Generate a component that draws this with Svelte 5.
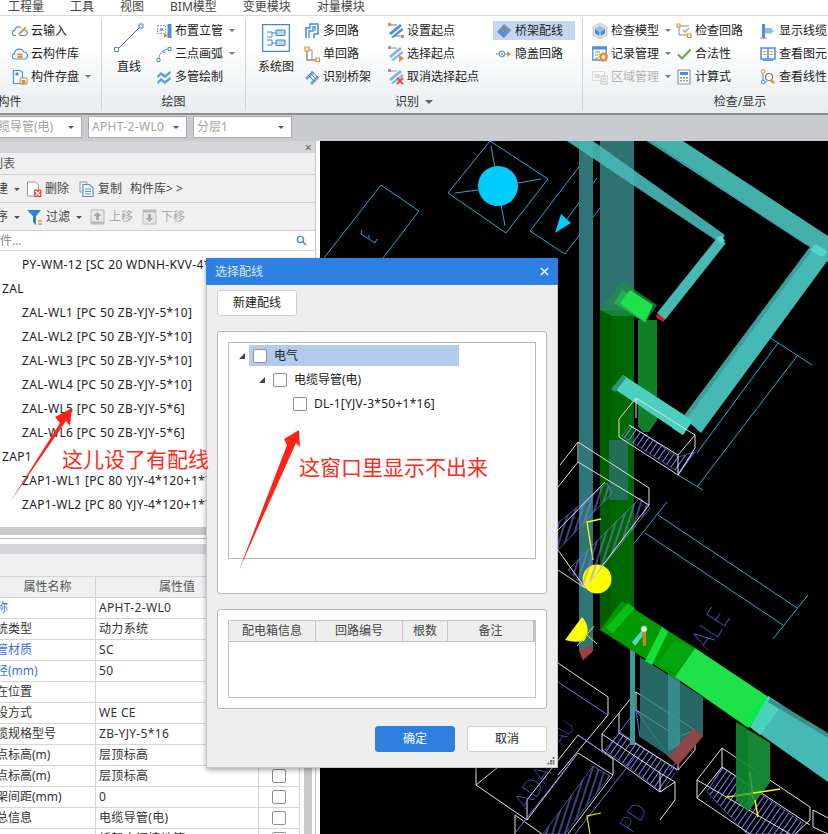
<script>
  const I = {
    cloudIn: '<path d="M4 12.5H3a2.6 2.6 0 0 1-.3-5.2A4 4 0 0 1 9 4.6" fill="none" stroke="#4a8fdc" stroke-width="1.2"/><path d="M12.5 7a2.6 2.6 0 0 1 0 5.5H7" fill="none" stroke="#4a8fdc" stroke-width="1.2"/><path d="M6 11l7-7.5 1.5 1.2-6.5 7z" fill="#f08a24"/>',
    cloudLib: '<path d="M4 13H3a2.7 2.7 0 0 1-.3-5.4A4.6 4.6 0 0 1 11.6 6 3.6 3.6 0 0 1 13 13H4" fill="none" stroke="#4a8fdc" stroke-width="1.1"/><path d="M5.5 8.5h5M5.5 11h5" stroke="#f08a24" stroke-width="1.8"/>',
    save: '<path d="M1.5 1.5h7l2 2v11h-9z" fill="#fff" stroke="#4a8fdc" stroke-width="1.2"/><path d="M3.5 3.5h3v3h-3z" fill="#4a8fdc"/><path d="M8 9h7v6H8z" fill="#fff" stroke="#777" stroke-width=".8"/><path d="M9.5 11h4v4h-4z" fill="#f08a24"/>',
    place: '<path d="M1.5 2.5h8v8h-8z" fill="none" stroke="#4a8fdc" stroke-dasharray="1.4 1.4"/><path d="M4 5h3v3H4z" fill="#8aa"/><path d="M11.5 1h4v14h-4z" fill="#4a8fdc"/><path d="M8 10l4 2.5L8 15z" fill="#f08a24"/>',
    arc: '<path d="M3 13C3 7 7 3 13 3" fill="none" stroke="#999" stroke-width="1"/><path d="M1 12.5h3v3H1zM12 1.5h3v3h-3z" fill="#fff" stroke="#4a8fdc"/><path d="M7 4.5h2v2H7z" fill="#fff" stroke="#4a8fdc" stroke-width=".7"/>',
    multi: '<path d="M1 7l4-4 4 3 5-4 1 2-6 5-4-3-3 3zM1 13l4-4 4 3 5-4 1 2-6 5-4-3-3 3z" fill="#4a8fdc" opacity=".9"/>',
    mloop: '<path d="M2 15V5h4V1h8v10h-4v4" fill="none" stroke="#4a8fdc" stroke-width="1.6"/><path d="M5 15V8h4V4h2v4" fill="none" stroke="#4a8fdc" stroke-width="1.4"/>',
    sloop: '<path d="M3 4v10h9" fill="none" stroke="#8c8c8c" stroke-width="1.4"/><path d="M3 4h5v9" fill="none" stroke="#8c8c8c" stroke-width="1"/><path d="M1 1h4v4H1zM12 12h3.500v3.500H12z" fill="#fff" stroke="#f08a24" stroke-width="1.2"/>',
    recog: '<path d="M1 9l7-7 2 2-7 7zM6 14l7-7 2 2-7 7z" fill="#6aa5e4"/><path d="M4 6l6 6M6 4l6 6M8 2.500l6 6" stroke="#3f7fcc" stroke-width="1"/>',
    setS: '<path d="M1 10L12 1l2 2L3 12zM3 14L14 5l1.500 2L5 15z" fill="#4a8fdc"/><path d="M1 2h8M7 13h8" stroke="#777"/><path d="M0 0h3v3H0zM13 12h3v3h-3z" fill="#f08a24"/>',
    selS: '<path d="M1 10L12 1l2 2L3 12zM3 14L14 5l1.500 2L5 15z" fill="#82b2e6"/><path d="M1 2h8" stroke="#999"/><path d="M0 0h3v3H0z" fill="#999"/><path d="M11 9l5 3.500-5 3.500z" fill="#f08a24"/>',
    canS: '<path d="M1 10L12 1l2 2L3 12zM3 14L14 5l1.500 2L5 15z" fill="#82b2e6"/><path d="M1 2h8" stroke="#999"/><path d="M0 0h3v3H0z" fill="#999"/><path d="M9 9l6 6M15 9l-6 6" stroke="#e0533d" stroke-width="2"/>',
    tray: '<path d="M1 9l7-8 7 6-7 8z" fill="#4a8fdc"/><path d="M4 6l6 5M6 4l6 5M8 2.500l6 5" stroke="#f08a24" stroke-width=".9"/><path d="M2.500 9l5.500 5" stroke="#8c8c8c"/>',
    hid: '<circle cx="6" cy="8" r="3" fill="none" stroke="#4a8fdc"/><path d="M4 6l4 4M8 6l-4 4" stroke="#4a8fdc" stroke-width=".7"/><path d="M0 8h3" stroke="#4a8fdc"/><path d="M9 8h3" stroke="#999"/><path d="M11 5l4 3-4 3z" fill="#f08a24"/>',
    cube: '<path d="M8 0l7 3.500v9L8 16l-7-3.500v-9z" fill="#ddd" stroke="#bbb" stroke-width=".6"/><path d="M8 3l5 2.500-5 2.500-5-2.500z" fill="#8fc0ee"/><path d="M3 6l4.500 2.500V13L3 10.500zM13 6L8.500 8.500V13l4.500-2.500z" fill="#4a8fdc"/>',
    rec: '<path d="M.8 1h13.500v13H.8z" fill="#fff" stroke="#4a8fdc" stroke-width="1.3"/><path d="M.8 1h13.500v2.500H.8z" fill="#4a8fdc"/><path d="M3 6h5M3 9h3M3 12h3" stroke="#888"/><circle cx="11.500" cy="11" r="3" fill="none" stroke="#f08a24" stroke-width="2"/><circle cx="11.500" cy="11" r="4.500" fill="none" stroke="#f08a24" stroke-width="1.200" stroke-dasharray="1.600 1.600"/>',
    area: '<path d="M.5 2.500h12v9H.5z" fill="none" stroke="#c8c8c8" stroke-dasharray="1.500 1"/><path d="M3 5h5v4H3z" fill="#ddd"/><path d="M9 7h7v8H9z" fill="#eee" stroke="#c8c8c8"/><path d="M10.500 10h4M10.500 12.500h4" stroke="#c8c8c8"/>',
    chkL: '<path d="M3 3h10M3 3v9h9" fill="none" stroke="#8c8c8c"/><path d="M1 1h3v3H1zM11.500 11h3.500v3.500h-3.500z" fill="#fff" stroke="#f08a24" stroke-width="1.200"/><path d="M7 7l2 2 4-4" fill="none" stroke="#8fb070" stroke-width="1.300"/>',
    ok: '<path d="M2 8.500l4 4 8.500-9" fill="none" stroke="#6fa84a" stroke-width="2.200"/>',
    calc: '<path d="M2 1h12v14H2z" fill="#fff" stroke="#8c9aa8" stroke-width="1.200"/><path d="M4 3h8v3H4z" fill="#4a8fdc"/><path d="M4 8h2v1.500H4zM7 8h2v1.500H7zM10 8h2v1.500h-2zM4 11h2v1.500H4zM7 11h2v1.500H7zM10 11h2v1.500h-2z" fill="#999"/>',
    cable: '<path d="M2 1h3v14H2z" fill="#4a8fdc"/><path d="M5 5h7v2l3 1-3 1v1.500H5z" fill="#8fbce8"/><path d="M0 15h7" stroke="#8c8c8c"/>',
    book: '<path d="M1 2h14v11H1z" fill="#fff" stroke="#4a8fdc" stroke-width="1.500"/><path d="M8 2v11" stroke="#4a8fdc" stroke-width="1.500"/><path d="M3 5.500h3.500M3 8.500h3.500M9.500 5.500H13M9.500 8.500H13" stroke="#f08a24"/><path d="M3 14.500h10" stroke="#4a8fdc"/>',
    vline: '<path d="M3 3v10h4" fill="none" stroke="#4a8fdc"/><circle cx="3" cy="2.500" r="1.800" fill="#fff" stroke="#f08a24"/><circle cx="3" cy="13" r="1.800" fill="#fff" stroke="#4a8fdc"/><circle cx="9" cy="8" r="3.500" fill="#fff" stroke="#777" stroke-width="1.200"/><path d="M11 11l3 3" stroke="#f08a24" stroke-width="2.500"/>',
    del: '<path d="M1.500 1h8l3 3v11h-11z" fill="#fff" stroke="#999"/><path d="M8 8.500h7.500V16H8z" fill="#e0533d"/><path d="M9.500 10l4.500 4.500M14 10l-4.500 4.500" stroke="#fff" stroke-width="1.100"/>',
    copy: '<path d="M1 1h7v2M1 1v10h2" fill="none" stroke="#999"/><path d="M4 3.500h6.500L14 7v8.500H4z" fill="#fff" stroke="#4a8fdc" stroke-width="1.200"/><path d="M6 8h6M6 10.500h6M6 13h6" stroke="#4a8fdc"/>',
    filter: '<path d="M0 1h14L9 7v9l-3-3V7z" fill="#2f7fd0"/><path d="M11 12h4M11 15h4" stroke="#f08a24" stroke-width="1.300"/>',
    up: '<path d="M1 1h13v14H1z" fill="#e8e8e8" stroke="#bbb"/><path d="M1 12.500h13V15H1z" fill="#bbb"/><path d="M7.500 3l4 4h-2.500v4H6V7H3.500z" fill="#aaa"/>',
    down: '<path d="M1 1h13v14H1z" fill="#e8e8e8" stroke="#bbb"/><path d="M1 1h13v2.500H1z" fill="#bbb"/><path d="M7.500 13l4-4h-2.500V5H6v4H3.500z" fill="#aaa"/>',
    search: '<circle cx="6.500" cy="6.500" r="4.500" fill="none" stroke="#3d8fd6" stroke-width="2"/><path d="M10 10l4.500 4.500" stroke="#3d8fd6" stroke-width="2.200"/>'
  };
  const c1 = [['cloudIn','云输入'],['cloudLib','云构件库'],['save','构件存盘',1]];
  const c2 = [['place','布置立管',1],['arc','三点画弧',1],['multi','多管绘制']];
  const c3 = [['mloop','多回路'],['sloop','单回路'],['recog','识别桥架']];
  const c4 = [['setS','设置起点'],['selS','选择起点'],['canS','取消选择起点']];
  const c6 = [['cube','检查模型',1],['rec','记录管理',1],['area','区域管理',1,1]];
  const c7 = [['chkL','检查回路'],['ok','合法性'],['calc','计算式']];
  const c8 = [['cable','显示线缆'],['book','查看图元'],['vline','查看线性']];
  const menu = ['工程量','工具','视图','BIM模型','变更模块','对量模块'];
  const list = [
    ['PY-WM-12 [SC 20 WDNH-KVV-4*1.5]',1],['ZAL',0],['ZAL-WL1 [PC 50 ZB-YJY-5*10]',1],['ZAL-WL2 [PC 50 ZB-YJY-5*10]',1],
    ['ZAL-WL3 [PC 50 ZB-YJY-5*10]',1],['ZAL-WL4 [PC 50 ZB-YJY-5*10]',1],['ZAL-WL5 [PC 50 ZB-YJY-5*6]',1],['ZAL-WL6 [PC 50 ZB-YJY-5*6]',1],
    ['ZAP1',0],['ZAP1-WL1 [PC 80 YJY-4*120+1*70]',1],['ZAP1-WL2 [PC 80 YJY-4*120+1*70]',1]
  ];
  const props = [
    ['称','APHT-2-WL0',1],['统类型','动力系统',0],['管材质','SC',1],['径(mm)','50',1],['在位置','',0],['设方式','WE CE',0],
    ['缆规格型号','ZB-YJY-5*16',0],['点标高(m)','层顶标高',0],['点标高(m)','层顶标高',0],['架间距(mm)','0',0],['总信息','电缆导管(电)',0],['','桥架中间接地箱',0]
  ];
  const wires = [
    '619,419 636,398 695,435 695,448 678,475 619,437 619,419','629,425 678,455 678,475','678,455 695,435','636,398 636,418',
    '578,442 649,488 649,505 585,588 558,570','578,442 560,465','578,442 578,462 649,505','558,550 585,588','558,530 605,482','578,462 558,487',
    '558,663 608,697 608,715 558,775','578,735 613,759 613,775 568,834','578,735 527,800 527,820 578,753 613,775','476,768 476,785 527,820','476,785 497,768','515,815 515,834','515,815 542,834',
    '602,734 619,713 636,692 695,730 695,750 678,770 619,733 619,713','602,734 660,773 675,782 675,800 660,820','602,734 602,750 660,792 675,782','660,773 660,792','636,692 636,710 678,737','678,770 678,737 695,730',
    '722,748 810,807 810,820 795,834','697,780 722,748 722,767 810,825','697,780 697,798 750,834','697,780 790,834','722,767 697,798','813,810 828,818','813,810 813,827 828,834'
  ];
  const blues = ['558,682 608,715','578,753 515,833','575,834 635,757','636,710 669,757','640,737 636,710 619,733','693,745 669,770','578,735 610,757'];
  const cyans = [
    '324,258 381,185 419,211 383,258','362,230 361,234 375,243 377,239','369,235 369,238',
    '490,141 548,179 506,233 448,193 490,141','491,146 495,168','541,179 518,183','455,193 478,190','501,204 505,226',
    '530,231 565,254 623,178','530,231 588,155','597,178 565,222',
    '632,546 667,502','658,515 797,608','645,533 783,625','773,639 808,595','763,333 812,365','778,343 697,453','797,356 697,487','678,475 703,490'
  ];
</script>

{#snippet icon(n, cls = 'ic')}
  <svg class={cls} viewBox="0 0 16 16">{@html I[n]}</svg>
{/snippet}

{#snippet col(items, cls)}
  <div class="col {cls}">
    {#each items as [n, t, drop, off]}
      <div class="item" class:off>
        {@render icon(n)}<span>{t}</span>{#if drop}<i class="tri"></i>{/if}
      </div>
    {/each}
  </div>
{/snippet}

<div class="page">
  <nav class="menu">
    {#each menu as m}<span>{m}</span>{/each}
  </nav>

  <section class="ribbon">
    <div class="group g1">
      <div class="cols">{@render col(c1, '')}</div>
      <div class="glabel">构件</div>
    </div>
    <div class="group g2">
      <div class="cols">
        <div class="big b-line">
          <svg viewBox="0 0 30 30"><path d="M3 27L27 3" stroke="#666" stroke-width="1"/><path d="M.5 24.500h4v4h-4zM25 1h4v4h-4z" fill="#fff" stroke="#3f87d8"/></svg>
          <span>直线</span>
        </div>
        {@render col(c2, 'c-place')}
      </div>
      <div class="glabel">绘图</div>
    </div>
    <div class="group g3">
      <div class="cols">
        <div class="big b-sys">
          <svg viewBox="0 0 28 28"><path d="M.7.700h26.600v26.600H.7z" fill="#fff" stroke="#3f87d8" stroke-width="1.200"/><path d="M5 8h5v5H5M5 16h5v5H5" fill="none" stroke="#3f87d8"/><path d="M14 6h9v5.500h-9zM14 16h9v5.500h-9z" fill="#bcd8f5" stroke="#3f87d8"/><path d="M10 9h4M10 19h4" stroke="#3f87d8"/></svg>
          <span>系统图</span>
        </div>
        {@render col(c3, 'c-loop')}
        {@render col(c4, 'c-start')}
        <div class="col c-tray">
          <div class="item hi">{@render icon('tray')}<span>桥架配线</span></div>
          <div class="item pad">{@render icon('hid')}<span>隐盖回路</span></div>
        </div>
      </div>
      <div class="glabel">识别 <i class="tri big-tri"></i></div>
    </div>
    <div class="group g4">
      <div class="cols">
        {@render col(c6, 'c-chk')}
        {@render col(c7, 'c-chk')}
        {@render col(c8, 'c-chk')}
      </div>
      <div class="glabel">检查/显示</div>
    </div>
  </section>

  <div class="selects">
    <div class="sel s1"><span>电缆导管(电)</span><i class="tri dark"></i></div>
    <div class="sel"><span class="latin">APHT-2-WL0</span><i class="tri dark"></i></div>
    <div class="sel"><span>分层1</span><i class="tri dark"></i></div>
  </div>

  <main class="main">
    <aside class="panel">
      <div class="strip"><span class="x">×</span></div>
      <div class="title"><span class="cut-title">列表</span></div>
      <div class="tools t1">
        <span class="cut1">新建</span><i class="tri dark"></i>
        <span class="tool m-del">{@render icon('del')}删除</span>
        <span class="tool m-copy">{@render icon('copy')}复制</span>
        <span class="m-lib">构件库&gt; &gt;</span>
      </div>
      <div class="tools t2">
        <span class="cut1">排序</span><i class="tri dark"></i>
        <span class="tool m-filter">{@render icon('filter')}过滤</span><i class="tri dark"></i>
        <span class="tool m-up gray">{@render icon('up')}上移</span>
        <span class="tool m-down gray">{@render icon('down')}下移</span>
      </div>
      <div class="search"><span class="ph">搜索构件...</span>{@render icon('search', 'sicon')}</div>
      <div class="list">
        {#each list as [t, sub]}<div class="li" class:sub>{t}</div>{/each}
      </div>
      <div class="hbar"></div>
      <div class="rule"></div>
      <div class="strip s2"></div>
      <div class="blank"></div>
      <div class="propwrap">
        <div class="props">
          <div class="pr head"><div class="c">属性名称</div><div class="c">属性值</div><div class="c"></div></div>
          {#each props as [a, b, blue]}
            <div class="pr">
              <div class="c name" class:blue>{a}</div>
              <div class="c val latin">{b}</div>
              <div class="c ck"><span class="box"></span></div>
            </div>
          {/each}
        </div>
        <div class="vbar"></div>
      </div>
    </aside>

    <svg class="canvas" viewBox="320 141 508 693">
      <defs>
        <pattern id="h" patternUnits="userSpaceOnUse" width="5" height="5" patternTransform="rotate(-55)">
          <path d="M0 2.500h5" stroke="#8080ff" stroke-width="1"/>
        </pattern>
        <pattern id="v" patternUnits="userSpaceOnUse" width="6" height="6" patternTransform="rotate(-72)">
          <path d="M0 3h6" stroke="#8080ff" stroke-width="1"/>
        </pattern>
      </defs>
      {#each cyans as p}<polyline points={p} fill="none" stroke="#12b4dc" stroke-width="1"/>{/each}
      <circle cx="498" cy="186" r="20" fill="#00ccff"/>
      <polygon points="555,233 561,214 571,223" fill="#00ccff"/>

      <!-- vertical shafts -->
      <rect x="579" y="141" width="14" height="510" fill="#2f7678"/>
      <polygon points="579,650 592,646 592,652 583,660" fill="#8a4a4a" stroke="#d22" stroke-width=".6"/>
      <rect x="600" y="141" width="34" height="170" fill="#2f7272"/>
      <rect x="600" y="310" width="34" height="320" fill="#005e00"/>
      <rect x="611" y="310" width="23" height="320" fill="#006800"/>
      <rect x="609" y="440" width="19" height="60" fill="#2f7272" fill-opacity=".75"/>
      <path d="M638 320h19v100l-8 12h-6l-5-6z" fill="#118027"/>

      <!-- upper teal trays -->
      <polygon points="647,141 683,141 828,236 828,262 810,247" fill="#47b9b5" fill-opacity=".95"/>
      <polygon points="647,141 652,141 810,247 806,245" fill="#3a9e9b"/>
      <polygon points="810,247 828,260 701,433 683,417" fill="#47b9b5"/>
      <polygon points="810,247 813,249 686,420 683,417" fill="#3a9e9b"/>
      <polygon points="816,244 828,252 822,257 810,250" fill="#4fd6cf"/>
      <polygon points="567,141 593,141 725,235 720,243" fill="#47b9b5" fill-opacity=".9"/>
      <polygon points="717,238 726,243 665,320 657,313" fill="#47b9b5"/>
      <polygon points="716,237 722,236 725,241 720,244" fill="#58d8d0"/>
      <polygon points="657,314 665,319 663,322 656,317" fill="#ff1010"/>

      <!-- green fitting -->
      <polygon points="600,310 622,281 657,305 645,323 633,316 612,316" fill="#1f8f4b" fill-opacity=".75"/>
      <polygon points="614,303 622,290 652,307 645,322" fill="#27ab57"/>
      <polygon points="620,303 630,290 653,305 645,322" fill="#1de24a"/>

      <!-- lower teal stub -->
      <polygon points="613,388 623,375 692,420 683,435" fill="#4bd0c0"/>
      <polygon points="611,389 623,375 626,378 615,392" fill="#2e8f86"/>
      <polygon points="683,417 692,422 683,435 672,428" fill="#4bd0c0"/>

      <!-- marks, hatching and wire boxes lie over the shafts -->
      <polyline points="601,519 587,522 593,560" fill="none" stroke="#ffff00" stroke-width="1.300"/>
      <circle cx="597" cy="579" r="14.500" fill="#ffff00"/>
      <path d="M565 640L582 617Q592 628 584 641Q574 643 565 640Z" fill="#ffff00"/>
      <path d="M577 646l17-20M587 635l10 9" stroke="#e8e800" stroke-width="1"/>
      <g stroke="#8080ff" stroke-width=".6">
        <polygon fill="url(#h)" points="630,425 678,457 695,452 680,473 622,436"/>
        <polygon fill="url(#v)" points="558,523 607,483 612,493 558,550"/>
        <polygon fill="url(#v)" points="568,570 640,498 650,508 585,588"/>
        <polygon fill="url(#h)" points="605,750 620,732 677,770 662,792"/>
        <polygon fill="url(#v)" points="593,766 610,776 565,834 543,834"/>
        <polygon fill="url(#h)" points="722,767 803,823 797,834 747,834 707,792"/>
      </g>
      {#each wires as p}<polyline points={p} fill="none" stroke="#e2e2e2" stroke-width="1"/>{/each}
      {#each blues as p}<polyline points={p} fill="none" stroke="#6f6ff0" stroke-width="1"/>{/each}
      <g class="cad">
        <text transform="translate(708 652) rotate(-57) scale(.78 1)" font-size="30">ALE</text>
        <text transform="translate(632 834) rotate(-57)" font-size="22">PD</text>
        <text transform="translate(527 812) rotate(-57)" font-size="24">ADA</text>
        <text transform="translate(562 746) rotate(-57)" font-size="18">AU</text>
      </g>

      <!-- large bottom bar -->
      <polygon points="640,657 703,697 703,736 670,757 640,737" fill="#2f7f7d" fill-opacity=".82"/>
      <polygon points="668,672 680,680 680,745 668,752" fill="#3a9492" fill-opacity=".8"/>
      <polygon points="669,757 693,729 703,736 678,765" fill="#8b4a4a" stroke="#e02020" stroke-width=".7"/>
      <rect x="630" y="643" width="5" height="102" fill="#3a9c9a"/>
      <polygon points="600,630 622,601 695,648 675,678" fill="#009a00"/>
      <polygon points="606,628 628,603 635,608 613,633" fill="#0fc81f" fill-opacity=".75"/>
      <polygon points="645,661 662,627 668,632 652,665" fill="#12df3b"/>
      <polygon points="656,665 675,640 695,648 675,672" fill="#00a810"/>
      <polygon points="675,677 695,648 767,696 747,727" fill="#1de24a"/>
      <polygon points="745,725 765,695 769,698 749,728" fill="#00f040"/>
      <polygon points="750,727 768,696 828,735 828,782" fill="#47b9b5"/>
      <polygon points="750,727 768,696 782,705 760,735" fill="#4bd2bc"/>
      <polygon points="770,698 828,733 828,738 768,702" fill="#3a8f8d"/>
      <polygon points="632,642 643,629 646,632 635,646" fill="#58d5c8"/>
      <polygon points="642,632 646,632 646,646 643,646" fill="#c8860e"/>
      <circle cx="644" cy="629" r="3" fill="#cfe" stroke="#bbb" stroke-width=".8"/>

      <polygon points="736,722 770,743 770,782 748,812 736,800" fill="#118a30" fill-opacity=".9"/>
      <polygon points="748,730 770,743 770,782 748,812" fill="#1a8f3a" fill-opacity=".6"/>
      <path d="M727 797l53-8M755 800l3 17" stroke="#ffff00" stroke-width="1.500"/>
      <path d="M733 796l20-3M750 772l3 27" stroke="#3aa03a" stroke-width="1.500"/>
      <polyline points="601,813 587,816 590,834" fill="none" stroke="#e8e800" stroke-width="1.200"/>
    </svg>
  </main>

  <section class="dialog">
    <header class="dtitle"><span>选择配线</span><svg class="close" viewBox="0 0 10 10"><path d="M1 1l8 8M9 1l-8 8" stroke="#fff" stroke-width="1.600"/></svg></header>
    <div class="dbody">
      <button class="btn new">新建配线</button>
      <div class="fs fs1">
        <div class="tree">
          <div class="node n0"><i class="arrow"></i><div class="hl"><span class="box"></span><span>电气</span></div></div>
          <div class="node n1"><i class="arrow"></i><span class="box"></span><span>电缆导管(电)</span></div>
          <div class="node n2"><span class="box"></span><span class="dl">DL-1[YJV-3*50+1*16]</span></div>
        </div>
      </div>
      <div class="fs fs2">
        <div class="tbl">
          <div class="th">
            <span class="w1">配电箱信息</span><span class="w2">回路编号</span><span class="w3">根数</span><span class="w4">备注</span>
          </div>
        </div>
      </div>
      <div class="actions">
        <button class="btn primary">确定</button>
        <button class="btn">取消</button>
      </div>
    </div>
    <svg class="grip" viewBox="0 0 8 8"><path d="M5.500 0h2v2h-2zM3 3h2v2H3zM5.500 3h2v2h-2zM.5 5.500h2v2h-2zM3 5.500h2v2H3zM5.500 5.500h2v2h-2z" fill="#777"/></svg>
  </section>

  <svg class="marks" viewBox="0 0 828 834">
    <polygon points="10,502 60,423 55,417 72,408 70,426 66,421" fill="#ff2216"/>
    <polygon points="239,570 287,445 284,439 299,430 300,447 296,443" fill="#ff2216"/>
  </svg>
  <div class="note n-a">这儿设了有配线</div>
  <div class="note n-b">这窗口里显示不出来</div>
</div>

<style>
  :global(body) { margin: 0; background: #fff; }
  .page {
    position: relative; width: 828px; height: 834px; overflow: hidden; display: flex; flex-direction: column;
    font: 12px/16px "Noto Sans", "Noto Sans CJK SC", sans-serif; color: #222;
  }
  svg { display: block; flex: none; }
  i { display: block; font-style: normal; }
  .latin { letter-spacing: .33px; }

  .menu { height: 15px; flex: none; display: flex; gap: 26px; padding-left: 8px; background: #fff; border-bottom: 1px solid #d8d8d8; line-height: 13px; color: #444; }

  .ribbon { height: 97px; flex: none; display: flex; background: linear-gradient(#fff 30%, #e8ecee); border-bottom: 2px solid #8a8c8e; overflow: hidden; }
  .group { flex: none; display: flex; flex-direction: column; justify-content: space-between; margin: 2px 0 3px; padding-top: 1px; box-sizing: border-box; border-right: 1px solid #d0d4d6; }
  .g1 { width: 184px; margin-left: -82px; padding-left: 94px; }
  .g2 { width: 144px; }
  .g3 { width: 337px; }
  .g4 { width: 314px; padding-left: 9px; border-right: 0; }
  .cols { display: flex; }
  .glabel { display: flex; justify-content: center; align-items: center; gap: 6px; height: 16px; color: #333; }
  .g4 .glabel { margin-left: -9px; }
  .g1 .glabel { margin-left: -94px; }
  .col { display: flex; flex-direction: column; flex: none; }
  .item { height: 23px; display: flex; align-items: center; gap: 3px; white-space: nowrap; box-sizing: border-box; }
  .item.off { color: #b4b4b4; }
  .ic { width: 16px; height: 16px; }
  .tri { width: 0; height: 0; border: 3px solid transparent; border-top: 3.500px solid #777; border-bottom: 0; margin-left: 3px; flex: none; }
  .big-tri { border-width: 4px; border-bottom: 0; border-top-color: #666; margin-left: 0; }
  .big { display: flex; flex-direction: column; align-items: center; flex: none; }
  .b-line { width: 30px; margin-left: 12px; padding-top: 4px; }
  .b-line svg { width: 30px; height: 30px; margin-bottom: 6px; }
  .b-sys { width: 36px; margin-left: 12px; padding-top: 5px; }
  .b-sys svg { width: 28px; height: 28px; margin-bottom: 7px; }
  .c-place { margin-left: 12px; }
  .c-loop { width: 84px; margin-left: 10px; }
  .c-start { width: 105px; }
  .c-tray { width: 82px; }
  .hi { background: #c5d7ef; padding-left: 3px; height: 19px; margin: 2px 0; }
  .pad { padding-left: 3px; }
  .c-chk { width: 84px; }

  .selects { height: 26px; flex: none; display: flex; align-items: flex-start; padding-top: 1px; box-sizing: border-box; gap: 6px; background: #c9cbce; }
  .sel { width: 99px; height: 22px; box-sizing: border-box; display: flex; align-items: center; justify-content: space-between; padding: 0 7px 0 3px; background: #fff; border: 1px solid #a9abad; color: #a2a2a2; white-space: nowrap; }
  .s1 { width: 102px; margin-left: -20px; padding-left: 5px; }
  .tri.dark { border-top-color: #555; }

  .main { flex: 1; display: flex; min-height: 0; background: #fff; }
  .panel { width: 315px; flex: none; margin-right: 4px; border-right: 1px solid #c4c6c8; display: flex; flex-direction: column; overflow: hidden; }
  .canvas { width: 508px; height: 693px; background: #000; }
  .strip { height: 12px; flex: none; background: #d3d5d9; display: flex; justify-content: flex-end; align-items: center; padding-right: 3px; }
  .x { font-size: 13px; line-height: 12px; color: #666; }
  .title { height: 21px; flex: none; background: #f0f0f0; border-bottom: 1px solid #cfcfcf; display: flex; align-items: center; color: #555; overflow: hidden; }
  .cut-title { margin-left: -9px; }
  .tools { height: 26px; padding-top: 1px; flex: none; background: #f0f0f0; border-bottom: 1px solid #cfcfcf; display: flex; align-items: center; white-space: nowrap; color: #444; }
  .cut1 { margin-left: -16px; }
  .tool { display: flex; align-items: center; gap: 3px; }
  .tools .tri { margin-left: 6px; }
  .m-del { margin-left: 6px; }
  .m-copy { margin-left: 10px; }
  .m-lib { margin-left: 8px; }
  .m-filter { margin-left: 7px; }
  .m-up { margin-left: 8px; }
  .m-down { margin-left: 9px; }
  .gray { color: #aaa; }
  .search { height: 19px; flex: none; background: #fff; border-bottom: 1px solid #d4d4d4; display: flex; justify-content: space-between; align-items: center; padding-right: 8px; color: #888; overflow: hidden; }
  .ph { margin-left: -36px; }
  .sicon { width: 11px; height: 11px; }
  .list { height: 276px; flex: none; padding-top: 2px; box-sizing: border-box; overflow: hidden; }
  .li { height: 24px; line-height: 24px; padding-left: 2px; white-space: nowrap; letter-spacing: .33px; }
  .li.sub { padding-left: 22px; }
  .hbar { height: 8px; flex: none; background: #c9c9c9; }
  .rule { height: 3px; flex: none; border-bottom: 1px solid #b8b8b8; margin-bottom: 5px; }
  .s2 { height: 10px; }
  .blank { height: 22px; flex: none; background: #f0f0f0; }
  .propwrap { flex: 1; display: flex; min-height: 0; }
  .props { width: 300px; flex: none; border-right: 1px solid #d4d4d4; border-top: 1px solid #d4d4d4; box-sizing: border-box; }
  .pr { display: grid; grid-template-columns: 96px 163px 40px; height: 21px; box-sizing: border-box; border-bottom: 1px solid #d4d4d4; }
  .c { border-right: 1px solid #d4d4d4; line-height: 20px; white-space: nowrap; overflow: hidden; }
  .c:last-child { border-right: 0; }
  .head .c { text-align: center; background: #f0f0f0; color: #555; }
  .name { text-indent: -4px; color: #333; }
  .name.blue { color: #3a6fdc; }
  .val { padding-left: 3px; color: #333; }
  .ck { display: flex; align-items: center; justify-content: center; }
  .box { display: block; width: 12px; height: 12px; border: 1px solid #8e8e8e; border-radius: 2px; background: #fff; flex: none; }
  .vbar { width: 8px; margin-left: 4px; background: #c9c9c9; flex: none; }

  .dialog { position: absolute; left: 206px; top: 258px; width: 352px; height: 510px; background: #eee; border: 1px solid #c4c8cc; border-top: 0; box-sizing: border-box; box-shadow: 0 2px 5px rgba(0,0,0,.35); display: flex; flex-direction: column; }
  .dtitle { height: 27px; flex: none; margin: 0 -1px; background: #2d7fe0; color: #d9e8fa; display: flex; align-items: center; justify-content: space-between; padding: 0 9px; }
  .close { width: 9px; height: 9px; }
  .dbody { flex: 1; padding: 5px 10px 0; display: flex; flex-direction: column; }
  .btn { width: 80px; height: 26px; padding: 0; border: 1px solid #cfcfcf; border-radius: 3px; background: #fff; font: inherit; color: #222; flex: none; }
  .btn.primary { background: #2d7fe0; border-color: #2d7fe0; color: #fff; }
  .fs { background: #fff; border: 1px solid #b8b8b8; border-radius: 3px; padding: 10px; box-sizing: border-box; width: 330px; flex: none; }
  .fs1 { height: 263px; margin-top: 15px; }
  .fs2 { height: 100px; margin-top: 15px; }
  .tree { height: 217px; border: 1px solid #b8b8b8; box-sizing: border-box; }
  .node { display: flex; align-items: center; height: 24px; gap: 7px; white-space: nowrap; }
  .n0 { height: 21px; margin-top: 2px; padding-left: 10px; gap: 4px; }
  .n1 { margin-top: 2px; padding-left: 30px; }
  .n1 .arrow { margin-right: 1px; }
  .n2 { padding-left: 64px; }
  .dl { letter-spacing: .26px; }
  .hl { width: 210px; height: 21px; background: #b0cbec; display: flex; align-items: center; gap: 7px; padding-left: 4px; box-sizing: border-box; }
  .arrow { width: 0; height: 0; border-style: solid; border-width: 0 0 6px 6px; border-color: transparent transparent #444 transparent; flex: none; }
  .tbl { height: 78px; border: 1px solid #c4c4c4; box-sizing: border-box; }
  .th { display: flex; height: 21px; background: #eee; border-bottom: 1px solid #c4c4c4; border-right: 2px solid #c4c4c4; box-sizing: border-box; color: #444; }
  .th span { text-align: center; line-height: 20px; border-right: 1px solid #c4c4c4; box-sizing: border-box; flex: none; }
  .w1 { width: 87px; } .w2 { width: 87px; } .w3 { width: 45px; } .th .w4 { flex: 1; border-right: 0; }
  .actions { display: flex; justify-content: flex-end; gap: 12px; margin-top: 17px; }
  .grip { position: absolute; right: 2px; bottom: 2px; width: 8px; height: 8px; }
  .marks { position: absolute; inset: 0; width: 828px; height: 834px; pointer-events: none; }
  .note { position: absolute; font-size: 21px; line-height: 26px; color: #ff2a1a; white-space: nowrap; }
  .n-a { left: 62px; top: 446px; }
  .n-b { left: 299px; top: 454px; }
  .cad text { fill: #6f6ff0; font-family: Inter, "Liberation Sans", sans-serif; font-weight: 100; }
</style>
